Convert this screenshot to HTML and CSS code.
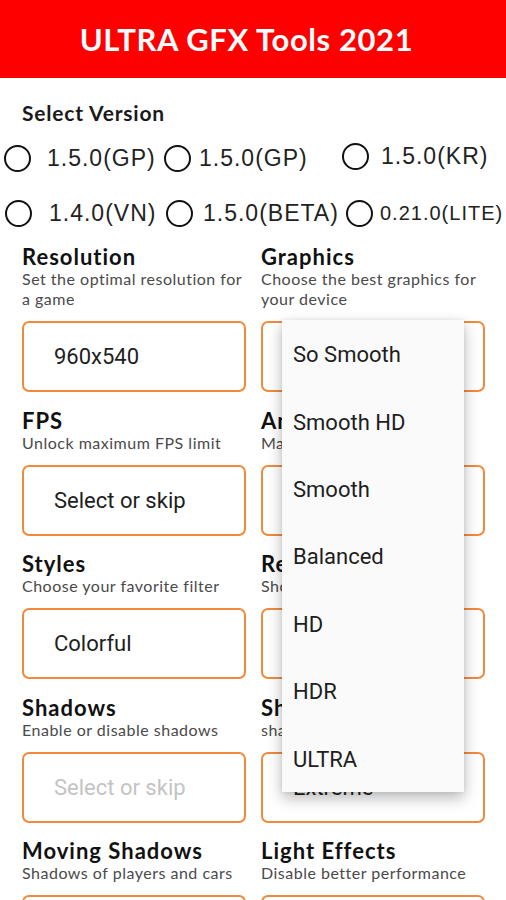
FILE: index.html
```html
<!DOCTYPE html>
<html lang="en">
<head>
<meta charset="utf-8">
<title>ULTRA GFX Tools 2021</title>
<link rel="stylesheet" href="styles.css">
</head>
<body>
<header class="topbar"><h1 class="title">ULTRA GFX Tools 2021</h1></header>
<main class="content">
  <h2 class="version-title">Select Version</h2>
  <div class="versions">
    <label class="radio r1"><span class="dot"></span><span class="rlabel">1.5.0(GP)</span></label>
    <label class="radio r2"><span class="dot"></span><span class="rlabel">1.5.0(GP)</span></label>
    <label class="radio r3"><span class="dot"></span><span class="rlabel">1.5.0(KR)</span></label>
    <label class="radio r4"><span class="dot"></span><span class="rlabel">1.4.0(VN)</span></label>
    <label class="radio r5"><span class="dot"></span><span class="rlabel">1.5.0(BETA)</span></label>
    <label class="radio r6"><span class="dot"></span><span class="rlabel small">0.21.0(LITE)</span></label>
  </div>

  <div class="fields">
    <div class="field">
      <h3 class="fname">Resolution</h3>
      <p class="fdesc">Set the optimal resolution for a game</p>
      <div class="fbox"><span class="fval">960x540</span></div>
    </div>
    <div class="field">
      <h3 class="fname">Graphics</h3>
      <p class="fdesc">Choose the best graphics for your device</p>
      <div class="fbox anchor">
        <span class="fval">Smooth</span>
        <ul class="menu">
          <li class="mitem">So Smooth</li>
          <li class="mitem">Smooth HD</li>
          <li class="mitem">Smooth</li>
          <li class="mitem">Balanced</li>
          <li class="mitem">HD</li>
          <li class="mitem">HDR</li>
          <li class="mitem">ULTRA</li>
        </ul>
      </div>
    </div>

    <div class="field">
      <h3 class="fname">FPS</h3>
      <p class="fdesc">Unlock maximum FPS limit</p>
      <div class="fbox"><span class="fval">Select or skip</span></div>
    </div>
    <div class="field">
      <h3 class="fname">Anti-aliasing</h3>
      <p class="fdesc">Make the edges smoother</p>
      <div class="fbox"><span class="fval">Select or skip</span></div>
    </div>

    <div class="field">
      <h3 class="fname">Styles</h3>
      <p class="fdesc">Choose your favorite filter</p>
      <div class="fbox"><span class="fval">Colorful</span></div>
    </div>
    <div class="field">
      <h3 class="fname">Rendering</h3>
      <p class="fdesc">Show more details</p>
      <div class="fbox"><span class="fval">Select or skip</span></div>
    </div>

    <div class="field">
      <h3 class="fname">Shadows</h3>
      <p class="fdesc">Enable or disable shadows</p>
      <div class="fbox"><span class="fval placeholder">Select or skip</span></div>
    </div>
    <div class="field">
      <h3 class="fname">Shadow Quality</h3>
      <p class="fdesc">shadow resolution</p>
      <div class="fbox"><span class="fval">Extreme</span></div>
    </div>

    <div class="field">
      <h3 class="fname">Moving Shadows</h3>
      <p class="fdesc">Shadows of players and cars</p>
      <div class="fbox"><span class="fval">Select or skip</span></div>
    </div>
    <div class="field">
      <h3 class="fname">Light Effects</h3>
      <p class="fdesc">Disable better performance</p>
      <div class="fbox"><span class="fval">Select or skip</span></div>
    </div>
  </div>
</main>
</body>
</html>
```
FILE: styles.css
```css
* { box-sizing: border-box; }
html, body { margin: 0; padding: 0; background: #fff; }
body { width: 506px; height: 900px; overflow: hidden; font-family: "Lato", "Liberation Sans", sans-serif; color: #161616; }

.topbar {
  height: 78px;
  background: #fe0000;
  display: flex;
  align-items: center;
  justify-content: center;
  padding-right: 13px;
}
.title {
  margin: 0;
  color: #fff;
  font-family: "Lato", sans-serif;
  font-weight: 700;
  font-size: 31px;
  letter-spacing: 0.6px;
}

.content { padding: 0; }

.version-title {
  margin: 22px 0 0 22px;
  height: 26px;
  line-height: 26px;
  font-size: 21px;
  font-weight: 700;
  letter-spacing: 0.8px;
  color: #1a1a1a;
}

.versions {
  display: grid;
  grid-template-columns: 160px 178px 1fr;
  grid-auto-rows: 55px;
  padding: 5px 0 0 4px;
}
.radio {
  display: flex;
  align-items: center;
  gap: 16px;
  font-family: "Liberation Sans", Arial, sans-serif;
  font-size: 23px;
  letter-spacing: 1px;
  color: #222;
}
.dot {
  width: 27px;
  height: 27px;
  border: 2px solid #111;
  border-radius: 50%;
  flex: none;
}
.r2 { gap: 8px; }
.r3 { gap: 12px; margin-top: -4px; }
.r4 { gap: 17px; padding-left: 1px; }
.r5 { gap: 10px; padding-left: 2px; }
.r6 { gap: 7px; padding-left: 4px; }
.rlabel.small { font-size: 20px; }

.fields {
  display: grid;
  grid-template-columns: 224px 224px;
  column-gap: 15px;
  row-gap: 16.5px;
  padding: 0 0 0 22px;
  margin-top: 4px;
}
.field { min-width: 0; }
.fname {
  margin: 0;
  height: 24px;
  line-height: 24px;
  font-size: 22px;
  font-weight: 700;
  letter-spacing: 1px;
  color: #111;
  white-space: nowrap;
}
.fdesc {
  margin: 0;
  font-size: 16px;
  line-height: 20px;
  letter-spacing: 0.5px;
  color: #4a4a4a;
}
.fbox {
  margin-top: 12px;
  height: 71px;
  border: 2px solid #f28a3e;
  border-radius: 7px;
  display: flex;
  align-items: center;
  padding-left: 30px;
  background: #fff;
}
.fval {
  font-family: "Roboto", sans-serif;
  font-size: 22px;
  color: #1e1e1e;
}
.fval.placeholder { color: #c4c4c4; }

.anchor { position: relative; }
.menu {
  position: absolute;
  top: -3px;
  left: 19px;
  width: 182px;
  height: 472px;
  margin: 0;
  padding: 0;
  list-style: none;
  background: #fafafa;
  box-shadow: 0 6px 14px rgba(0,0,0,0.28), 0 0 4px rgba(0,0,0,0.08);
  z-index: 5;
  display: flex;
  flex-direction: column;
}
.mitem {
  height: 67.4px;
  display: flex;
  align-items: center;
  padding-left: 11px;
  padding-top: 2px;
  font-family: "Roboto", sans-serif;
  font-size: 22px;
  color: #1e1e1e;
}
```
